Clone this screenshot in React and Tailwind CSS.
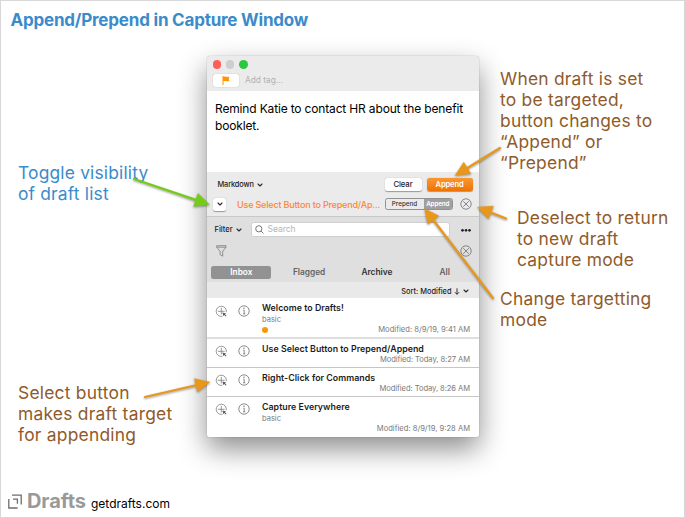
import React from 'react';

const Chevron = ({ className = '' }) => (
  <svg className={`h-[4px] w-[6px] shrink-0 ${className}`} viewBox="0 0 6 4" fill="none" stroke="#2b2b2b" strokeWidth="1.1" strokeLinecap="round" strokeLinejoin="round">
    <path d="M1 1 L3 3 L5 1" />
  </svg>
);

const CloseCircle = () => (
  <svg className="h-[12px] w-[12px] shrink-0" viewBox="0 0 12 12" fill="none" stroke="#6f6f6f" strokeWidth="0.8">
    <circle cx="6" cy="6" r="5.2" />
    <path d="M3.2 3.2 L8.8 8.8 M8.8 3.2 L3.2 8.8" />
  </svg>
);

const TargetIcon = () => (
  <svg className="h-[13px] w-[13px] shrink-0" viewBox="0 0 13 13" fill="none" stroke="#7d7d7d" strokeWidth="0.8">
    <path d="M7.4 11.3 A5.1 5.1 0 1 1 11.3 7.2" />
    <path d="M6.3 2.9 V9.4 M2.9 6.3 H9.7" />
    <path d="M7.4 7.4 L11.2 8.4 L10 9.2 L11.6 10.9 L10.8 11.6 L9.2 10 L8.4 11.2 Z" fill="#5c5c5c" stroke="none" />
  </svg>
);

const InfoIcon = () => (
  <svg className="h-[12px] w-[12px] shrink-0" viewBox="0 0 12 12" fill="none" stroke="#6f6f6f" strokeWidth="0.8">
    <circle cx="6" cy="6" r="5.2" />
    <path d="M5.2 5.2 H6.2 V8.8 M5 8.8 H7.3" strokeWidth="0.8" />
    <circle cx="6" cy="3.3" r="0.7" fill="#6f6f6f" stroke="none" />
  </svg>
);

function Arrow({ from, to, color }) {
  const dx = to[0] - from[0];
  const dy = to[1] - from[1];
  const len = Math.hypot(dx, dy);
  const ux = dx / len;
  const uy = dy / len;
  const bx = to[0] - ux * 14.5;
  const by = to[1] - uy * 14.5;
  const h = 6.9;
  return (
    <g fill={color} stroke={color}>
      <line x1={from[0]} y1={from[1]} x2={bx} y2={by} strokeWidth="2.2" strokeLinecap="round" />
      <polygon strokeWidth="0.3" points={`${to[0]},${to[1]} ${bx - uy * h},${by + ux * h} ${bx + uy * h},${by - ux * h}`} />
    </g>
  );
}

function Draft({ title, kind, dot, modified, tracking = '', iconPad = 'pt-[7px]', className }) {
  return (
    <div className={`flex bg-white pr-[9px] pl-[8px] ${className}`}>
      <div className={`flex gap-[10px] ${iconPad}`}>
        <TargetIcon />
        <InfoIcon />
      </div>
      <div className="flex flex-1 flex-col pt-[4px] pl-[12px]">
        <div className="text-[8.8px] leading-[12px] font-semibold tracking-[0.04px] text-[#1c1c1c]">{title}</div>
        {kind && <div className="text-[7.5px] leading-[11px] text-[#7a7a7a]">{kind}</div>}
        <div className={`flex items-center justify-between text-[7.6px] leading-[10px] text-[#7a7a7a] ${tracking}`}>
          {dot ? <span className="h-[6px] w-[6px] rounded-full bg-[#ff9500]" /> : <span />}
          <span>{modified}</span>
        </div>
      </div>
    </div>
  );
}

function CaptureWindow() {
  return (
    <div className="h-[381px] w-[272px] overflow-hidden rounded-t-[4px] rounded-b-[3px] bg-white shadow-[0_0_1px_rgba(0,0,0,0.5),0_12px_28px_rgba(0,0,0,0.45)]">
      <div className="h-[35px] bg-[#ebebeb] pt-[4px] pl-[5.5px]">
        <div className="flex gap-[4.9px]">
          <span className="h-[8.5px] w-[8.5px] rounded-full bg-[#ff5f57]" />
          <span className="h-[8.5px] w-[8.5px] rounded-full bg-[#cecece]" />
          <span className="h-[8.5px] w-[8.5px] rounded-full bg-[#28c840]" />
        </div>
        <div className="mt-[5.5px] flex items-center">
          <div className="flex h-[13px] w-[26px] items-center justify-center rounded-[2.5px] bg-white shadow-[0_0_1px_rgba(0,0,0,0.35)]">
            <svg className="h-[9px] w-[8px]" viewBox="0 0 8 9" fill="#ff9500">
              <path d="M0.5 0 H1.5 V0.7 C2.6 0.3 3.4 1.3 7.4 0.8 L6.7 3 L7.4 5.2 C4.2 5.6 2.6 4.8 1.5 5.2 V9 H0.5 Z" />
            </svg>
          </div>
          <span className="ml-[6.5px] text-[8.3px] leading-[13px] text-[#b2b2b2]">Add tag...</span>
        </div>
      </div>

      <div className="h-[81px] bg-white pt-[8.5px] pl-[8px] text-[12px] leading-[17px] tracking-[-0.16px] text-black">
        Remind Katie to contact HR about the benefit
        <br />
        booklet.
      </div>

      <div className="h-[45px] border-b border-[#c8c8c8] bg-[#ebebeb] pl-[6px]">
        <div className="flex h-[25px] items-center pr-[6.5px]">
          <span className="ml-[4.5px] text-[7.4px] font-medium tracking-[-0.02em] text-[#222]">Markdown</span>
          <Chevron className="ml-[3px]" />
          <span className="mr-[5px] ml-auto flex h-[13.5px] w-[37px] items-center justify-center rounded-[2.5px] bg-white text-[7.7px] font-medium tracking-[-0.01em] text-[#222] shadow-[0_0.3px_1px_rgba(0,0,0,0.35)]">Clear</span>
          <span className="flex h-[13.5px] w-[46px] items-center justify-center rounded-[2.5px] bg-gradient-to-b from-[#f9982f] to-[#ee7200] text-[7.6px] font-semibold tracking-[-0.02em] text-white shadow-[0_0.3px_1px_rgba(0,0,0,0.35)]">Append</span>
        </div>
        <div className="flex h-[14px] items-center pr-[7px]">
          <span className="flex h-[13px] w-[13px] items-center justify-center rounded-[2.5px] bg-white shadow-[0_0.3px_1px_rgba(0,0,0,0.35)]">
            <Chevron />
          </span>
          <span className="ml-[11px] text-[9px] font-medium tracking-[-0.18px] whitespace-nowrap text-[#ff8530]">Use Select Button to Prepend/Ap...</span>
          <span className="mr-[7px] ml-auto flex h-[12px] w-[68.5px] overflow-hidden rounded-[2.5px] border border-[#929292] text-[6.3px] leading-[10px]">
            <span className="w-[38px] text-center font-medium text-[#333]">Prepend</span>
            <span className="flex-1 bg-[#a0a0a0] text-center font-semibold tracking-[-0.02em] text-white">Append</span>
          </span>
          <CloseCircle />
        </div>
      </div>

      <div className="h-[65px] bg-[#dfdfdf] pt-[5px]">
        <div className="flex h-[15px] items-center pr-[8px] pl-[7.5px]">
          <span className="text-[7.5px] font-medium text-[#222]">Filter</span>
          <Chevron className="ml-[3px]" />
          <div className="ml-[9.5px] flex h-[14.5px] w-[199px] items-center rounded-[2.5px] border border-[#cfcfcf] bg-white pl-[3px]">
            <svg className="h-[9px] w-[9px]" viewBox="0 0 9 9" fill="none" stroke="#777" strokeWidth="1">
              <circle cx="3.8" cy="3.8" r="3.1" />
              <path d="M6.1 6.1 L8.5 8.5" />
            </svg>
            <span className="ml-[3.5px] text-[8.6px] tracking-[-0.01em] text-[#b5b5b5]">Search</span>
          </div>
          <svg className="ml-auto h-[4px] w-[10px]" viewBox="0 0 10 4" fill="#222">
            <circle cx="1.5" cy="2.3" r="1.35" />
            <circle cx="5" cy="2.3" r="1.35" />
            <circle cx="8.5" cy="2.3" r="1.35" />
          </svg>
        </div>
        <div className="mt-[6.5px] flex h-[14px] items-center justify-between pr-[7px] pl-[9px]">
          <svg className="h-[12px] w-[11px]" viewBox="0 0 11 12" fill="none" stroke="#7a7a7a" strokeWidth="0.8" strokeLinejoin="round">
            <path d="M0.7 0.7 H10 V2.2 L6.7 6.3 V11.2 L4.1 9.6 V6.3 L0.7 2.2 Z" />
            <path d="M0.8 2.2 H9.9" />
          </svg>
          <CloseCircle />
        </div>
        <div className="mt-[8.5px] grid grid-cols-4 px-[0.5px] text-center text-[8.3px] leading-[12.5px] font-semibold text-[#636363]">
          <span className="mx-auto w-[60px] rounded-[2.5px] bg-[#929292] text-white">Inbox</span>
          <span>Flagged</span>
          <span className="text-[#333]">Archive</span>
          <span>All</span>
        </div>
      </div>

      <div className="flex h-[16px] items-center justify-end bg-[#e9e9e9] pt-[2px] pr-[10px]">
        <span className="text-[7.4px] font-medium text-[#222]">Sort: Modified</span>
        <svg className="ml-[2.5px] h-[7px] w-[6px]" viewBox="0 0 6 7" fill="none" stroke="#222" strokeWidth="0.9">
          <path d="M3 0.3 V6.3 M0.9 4.2 L3 6.3 L5.1 4.2" />
        </svg>
        <Chevron className="ml-[3px]" />
      </div>

      <Draft className="h-[41px] border-b-2 border-[#dedede]" title="Welcome to Drafts!" kind="basic" dot modified="Modified: 8/9/19, 9:41 AM" />
      <Draft className="h-[28.5px] border-b border-[#c6c6c6]" title="Use Select Button to Prepend/Append" modified="Modified: Today, 8:27 AM" tracking="tracking-[-0.01em]" iconPad="pt-[6px]" />
      <Draft className="h-[29px] border-b border-[#c6c6c6]" title="Right-Click for Commands" modified="Modified: Today, 8:26 AM" tracking="tracking-[-0.01em]" iconPad="pt-[6.5px]" />
      <Draft className="h-[40.5px]" title="Capture Everywhere" kind="basic" modified="Modified: 8/9/19, 9:28 AM" iconPad="pt-[6.5px]" />
    </div>
  );
}

export default function App() {
  return (
    <div className="relative h-[518px] w-[685px] overflow-hidden border border-[#d8d8d8] bg-white font-['Inter','Liberation_Sans',sans-serif]">
      <h1 className="h-[55px] pt-[8px] pl-[9.5px] text-[17px] leading-[22px] font-bold tracking-[-0.2px] text-[#3b8bcb]">Append/Prepend in Capture Window</h1>

      <div className="flex h-[432px] text-[17.4px] leading-[21px] tracking-[0.24px] whitespace-nowrap text-[#8f5b2c]">
        <div className="w-[206px] shrink-0 pl-[17px]">
          <p className="pt-[106px] tracking-[0.18px] text-[#3b8bcb]">
            Toggle visibility<br />of draft list
          </p>
          <p className="pt-[178px]">
            Select button<br />makes draft target<br />for appending
          </p>
        </div>
        <div className="shrink-0 tracking-normal">
          <CaptureWindow />
        </div>
        <div className="pl-[21px]">
          <p className="pt-[12px]">
            When draft is set<br />to be targeted,<br />button changes to<br />“Append” or<br />“Prepend”
          </p>
          <p className="pt-[34px] pl-[17px]">
            Deselect to return<br />to new draft<br />capture mode
          </p>
          <p className="pt-[18px]">
            Change targetting<br />mode
          </p>
        </div>
      </div>

      <footer className="flex h-[28px] items-baseline pl-[7px]">
        <svg className="mt-[6px] h-[15px] w-[14px] self-start" viewBox="0 0 14 15" fill="none" stroke="#6d6d6d" strokeWidth="1.3">
          <path d="M4 1.2 H13.2 V10.4" />
          <path d="M0.8 5 V14 H9.6" />
          <path d="M5 5.2 H9.4 V9.8" />
        </svg>
        <span className="ml-[5px] text-[20px] leading-[27px] font-bold tracking-[-0.08px] text-[#999]">Drafts</span>
        <span className="ml-[5px] text-[12px] text-black">getdrafts.com</span>
      </footer>

      <svg className="pointer-events-none absolute -top-px -left-px h-[518px] w-[685px] drop-shadow-[0_1px_1px_rgba(0,0,0,0.4)]" viewBox="0 0 685 518">
        <Arrow from={[134, 179]} to={[209.5, 204.5]} color="#74cc18" />
        <Arrow from={[500, 148]} to={[455, 175.5]} color="#e8971a" />
        <Arrow from={[506, 218.5]} to={[477.5, 207]} color="#e8971a" />
        <Arrow from={[493, 298]} to={[424.5, 208.5]} color="#e8971a" />
        <Arrow from={[145, 397]} to={[210, 382]} color="#e8971a" />
      </svg>
    </div>
  );
}
